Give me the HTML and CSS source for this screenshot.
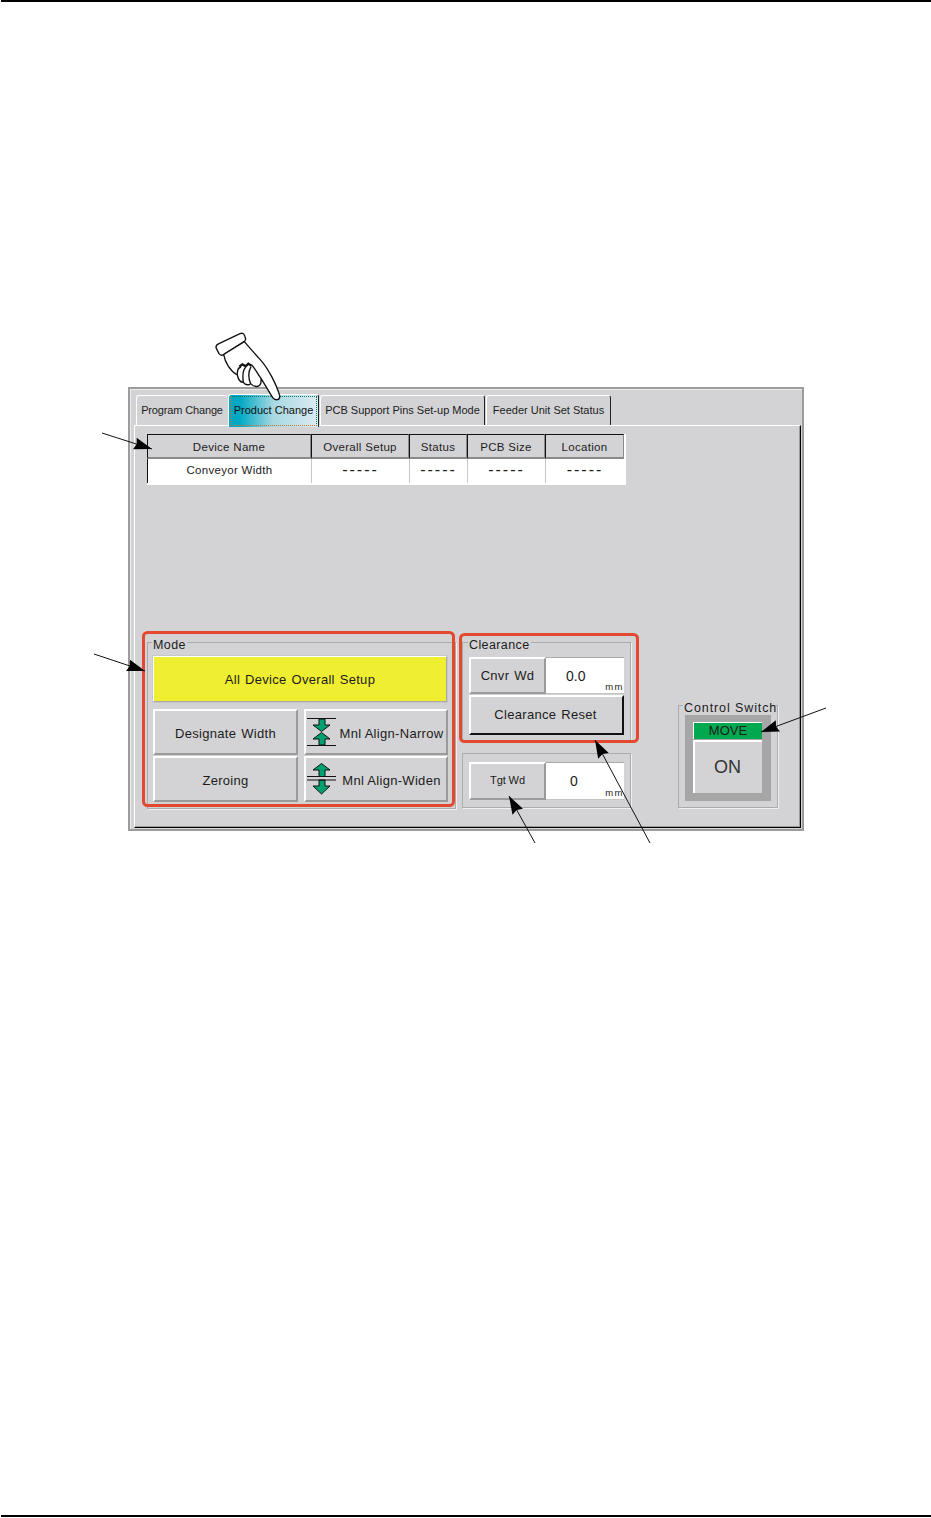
FILE: index.html
```html
<!DOCTYPE html>
<html lang="en">
<head>
    <meta charset="UTF-8">
    <meta name="viewport" content="width=device-width, initial-scale=1.0">
    <title>Product Change</title>
    <link rel="stylesheet" href="styles.css">
</head>
<body>
    <div class="page">
        <div class="rule rule-top"></div>

        <div class="window">
            <div class="tabs">
                <div class="tab">Program Change</div>
                <div class="tab tab-active"><span>Product Change</span></div>
                <div class="tab">PCB Support Pins Set-up Mode</div>
                <div class="tab">Feeder Unit Set Status</div>
            </div>

            <div class="panel">
                <table class="status">
                    <tr>
                        <th class="col-name">Device Name</th>
                        <th class="col-setup">Overall Setup</th>
                        <th class="col-status">Status</th>
                        <th class="col-size">PCB Size</th>
                        <th class="col-location">Location</th>
                    </tr>
                    <tr>
                        <td>Conveyor Width</td>
                        <td class="dash">-----</td>
                        <td class="dash">-----</td>
                        <td class="dash">-----</td>
                        <td class="dash">-----</td>
                    </tr>
                </table>

                <div class="lower">
                    <fieldset class="group group-mode">
                        <legend>Mode</legend>
                        <button class="btn btn-yellow">All Device Overall Setup</button>
                        <div class="mode-grid">
                            <button class="btn">Designate Width</button>
                            <button class="btn btn-icon">
                                <svg class="icon" viewBox="0 0 30 32">
                                    <path class="bar" d="M0 2.5H29M0 29.5H29"/>
                                    <path class="arrow-fill" d="M12 3V9H6L14.5 15.5L23 9H18V3Z"/>
                                    <path class="arrow-fill" d="M12 29V23H6L14.5 16.5L23 23H18V29Z"/>
                                </svg>
                                <span>Mnl Align-Narrow</span>
                            </button>
                            <button class="btn">Zeroing</button>
                            <button class="btn btn-icon">
                                <svg class="icon" viewBox="0 0 30 32">
                                    <path class="arrow-fill" d="M12 13.5V7H6L14.5 .5L23 7H18V13.5Z"/>
                                    <path class="arrow-fill" d="M12 17V23H6L14.5 31L23 23H18V17Z"/>
                                    <path class="bar" d="M0 13.5H29M0 17H29"/>
                                </svg>
                                <span>Mnl Align-Widen</span>
                            </button>
                        </div>
                    </fieldset>

                    <div class="middle">
                        <fieldset class="group group-clearance">
                            <legend>Clearance</legend>
                            <div class="readout readout-cnvr">
                                <button class="btn">Cnvr Wd</button>
                                <div class="field"><span class="value">0.0</span><span class="unit">mm</span></div>
                            </div>
                            <button class="btn btn-reset">Clearance Reset</button>
                        </fieldset>
                        <div class="group group-target">
                            <div class="readout readout-tgt">
                                <button class="btn btn-small">Tgt Wd</button>
                                <div class="field"><span class="value">0</span><span class="unit">mm</span></div>
                            </div>
                        </div>
                    </div>

                    <fieldset class="group group-control">
                        <legend>Control Switch</legend>
                        <div class="switch">
                            <div class="switch-state">MOVE</div>
                            <div class="switch-button">ON</div>
                        </div>
                    </fieldset>
                </div>
            </div>
        </div>

        <div class="rule rule-bottom"></div>
    </div>

    <!-- callouts drawn over the screen -->
    <svg class="hand" viewBox="0 0 270 300">
        <path class="hand-line" d="M33 68Q32 60 42 56L105 26Q115 22 119 32L122 42Q122 48 114 52L58 88Q48 94 42 86Z"/>
        <path class="hand-line" d="M56 88C60 112 75 138 97 150C100 165 108 172 115 172C122 182 132 180 137 176C148 188 165 188 168 172L168 160L203 218C210 228 226 226 224 212C215 180 190 130 165 103C155 92 135 70 118 50Z"/>
        <path class="hand-line" d="M97 150C96 135 100 128 108 126M115 172C112 150 114 135 122 127M137 176C130 160 130 140 138 125M168 160C160 150 150 130 140 120"/>
        <path class="hand-knuckle" d="M103 125L112 118L122 124L130 116L140 122"/>
    </svg>

    <svg class="callouts" viewBox="0 0 931 1518">
        <defs>
            <marker id="head" markerUnits="userSpaceOnUse" markerWidth="20" markerHeight="13" refX="18" refY="6" orient="auto">
                <path d="M0 0L18 6L0 12L2 6Z"/>
            </marker>
        </defs>
        <rect class="red-box" x="143.5" y="632.5" width="310" height="173" rx="4"/>
        <rect class="red-box" x="460.5" y="634.5" width="177" height="107" rx="4"/>
        <line class="pointer" x1="102" y1="433" x2="152" y2="449"/>
        <line class="pointer" x1="94" y1="654" x2="145" y2="671"/>
        <line class="pointer" x1="535" y1="843" x2="509" y2="796"/>
        <line class="pointer" x1="650" y1="843" x2="595" y2="740"/>
        <line class="pointer" x1="826" y1="708" x2="761" y2="732"/>
    </svg>
</body>
</html>
```

FILE: styles.css
```css
* {
    box-sizing: border-box;
}
body {
    margin: 0;
    background: white;
    font-family: "Liberation Sans", Arial, sans-serif;
    color: #1c1c1c;
}
.page {
    display: flex;
    flex-direction: column;
    height: 1518px;
    overflow: hidden;
}
.rule {
    height: 2px;
    margin-left: 1px;
    background: black;
}
.rule-bottom {
    margin-top: auto;
    margin-bottom: 1px;
}

/* machine screen */
.window {
    display: flex;
    flex-direction: column;
    width: 676px;
    height: 444px;
    margin: 385px 0 0 128px;
    padding: 6px 1px 1px 4px;
    background: #d3d3d5;
    border: 2px solid #9c9c9c;
    box-shadow: inset 1px 1px 0 #ececec;
}
.tabs {
    display: flex;
    height: 30px;
    margin-left: 2px;
    font-size: 11px;
}
.tab {
    display: flex;
    align-items: center;
    justify-content: center;
    height: 30px;
    padding: 0 0 2px;
    margin-right: 1px;
    border: 1px solid white;
    border-bottom: none;
    border-right: 1px solid #222;
    border-radius: 3px 3px 0 0;
    white-space: nowrap;
}
.tab:nth-child(1) {
    width: 91px;
    border-right: none;
    letter-spacing: -0.15px;
}
.tab:nth-child(3) { width: 165px; }
.tab:nth-child(4) { width: 125px; }
.tab-active {
    position: relative;
    width: 91px;
    height: 33px;
    margin-top: -1px;
    padding: 1px;
    background: linear-gradient(to right, #00a8c4 0%, #00a8c4 12%, #a8d8e2 50%, #dcecf1 100%);
}
.tab-active span {
    display: flex;
    align-items: center;
    justify-content: center;
    width: 100%;
    height: 100%;
    padding-bottom: 2px;
    color: #111;
    border-top: 1px dotted #0a7a6a;
    border-right: 1px dotted #0a7a6a;
    border-bottom: 1px dotted #d5702a;
    border-left: 1px dotted #d5702a;
}
.panel {
    display: flex;
    flex-direction: column;
    flex: 1;
    padding: 8px 0 18px 12px;
    border-top: 1px solid white;
    border-left: 1px solid white;
    border-right: 1px solid black;
    border-bottom: 1px solid black;
    box-shadow: inset -1px -1px 0 #999;
}

/* status table */
.status {
    width: 479px;
    table-layout: fixed;
    border-collapse: separate;
    border-spacing: 0;
    border-right: 2px solid white;
    border-bottom: 2px solid white;
    font-size: 11.5px;
    letter-spacing: 0.3px;
}
.status th,
.status td {
    padding: 0;
    text-align: center;
    font-weight: normal;
}
.status th {
    height: 25px;
    padding-top: 1px;
    border-top: 1px solid #111;
    border-left: 1px solid #111;
    border-right: 1px solid #8a8a8a;
    border-bottom: 2px solid #8a8a8a;
}
.status td {
    height: 24px;
    padding-bottom: 2px;
    background: white;
}
.status td:first-child {
    border-left: 1px solid #111;
}
.status td + td {
    border-left: 1px solid #c8c8c8;
}
.status .dash {
    font-size: 16px;
    letter-spacing: 2px;
}
.col-name { width: 164px; }
.col-setup { width: 98px; }
.col-status { width: 58px; }
.col-size { width: 78px; }
.col-location { width: 79px; }

/* lower groups */
.lower {
    display: flex;
    align-items: flex-end;
    margin-top: auto;
}
.group {
    margin: 0;
    min-width: 0;
    padding: 7px 5px 6px;
    border: 1px solid #ababab;
    box-shadow: 1px 1px 0 #efefef;
}
.group legend {
    padding: 6px 1px 0;
    margin-left: -1px;
    font-size: 12.5px;
    line-height: 8px;
    letter-spacing: 0.4px;
    white-space: nowrap;
}
.group-mode {
    width: 309px;
    margin-right: 6px;
}
.middle {
    display: flex;
    flex-direction: column;
    gap: 12px;
    width: 169px;
    margin-bottom: 1px;
}
.group-clearance {
    width: 169px;
    padding: 8px 6px 5px;
}
.group-target {
    padding: 8px 6px 7px;
}
.group-control {
    flex: none;
    width: 100px;
    margin-left: 47px;
    margin-bottom: 1px;
    padding: 3px 6px 6px;
}
.group-control legend {
    width: 88px;
    margin-left: -2px;
    letter-spacing: 0.9px;
}

/* buttons */
.btn {
    display: flex;
    align-items: center;
    justify-content: center;
    width: 100%;
    padding: 0;
    font-family: inherit;
    font-size: 13px;
    letter-spacing: 0.3px;
    word-spacing: 1px;
    color: #1c1c1c;
    background: #d3d3d5;
    border: 2px solid;
    border-color: white #9a9a9a #9a9a9a white;
}
.btn-yellow {
    height: 46px;
    width: 294px;
    background: #f0ee30;
    border-width: 1px;
    border-color: white #a8a8a8 #a8a8a8 white;
    box-shadow: 0 0 0 1px #c8c8c8;
}
.mode-grid {
    display: grid;
    grid-template-columns: 145px 144px;
    grid-auto-rows: 46px;
    gap: 1px 6px;
    margin-top: 7px;
}
.mode-grid .btn {
    padding-top: 2px;
}
.btn-icon {
    justify-content: flex-start;
    padding-left: 1px;
    word-spacing: 0;
}
.btn-icon span {
    flex: 1;
    text-align: center;
    white-space: nowrap;
}
.icon {
    flex: none;
    width: 30px;
    height: 32px;
    margin-top: -2px;
}
.bar {
    fill: none;
    stroke: #111;
    stroke-width: 1.2;
}
.arrow-fill {
    fill: #00a070;
    stroke: #111;
    stroke-width: 1;
}
.readout {
    display: flex;
    width: 155px;
}
.readout-cnvr { height: 37px; }
.readout-tgt { height: 38px; }
.readout .btn {
    width: 77px;
    flex: none;
}
.btn.btn-small {
    padding-bottom: 2px;
    font-size: 11px;
    letter-spacing: -0.1px;
    word-spacing: 0;
}
.field {
    display: flex;
    flex: 1;
    align-items: center;
    padding-left: 20px;
    background: white;
    font-size: 14px;
    border-top: 1px solid #aaa;
    border-bottom: 1px solid #c4c4c4;
}
.readout-tgt .field {
    padding-left: 24px;
}
.value {
    flex: 1;
}
.unit {
    align-self: flex-end;
    font-size: 9.5px;
    line-height: 12px;
    letter-spacing: 1.5px;
}
.btn-reset {
    width: 155px;
    height: 40px;
    margin-top: 1px;
    padding: 0 2px 2px 0;
    border-color: white #111 #111 white;
}

/* control switch */
.switch {
    display: flex;
    flex-direction: column;
    gap: 1px;
    width: 86px;
    height: 86px;
    padding: 7px 9px 8px 8px;
    background: #a6a6a6;
}
.switch-state {
    height: 17px;
    line-height: 16px;
    text-align: center;
    font-size: 13px;
    background: #00a850;
    border-top: 1px solid white;
    border-left: 1px solid white;
}
.switch-button {
    display: flex;
    flex: 1;
    align-items: center;
    justify-content: center;
    padding-right: 2px;
    font-size: 18px;
    color: #333;
    background: #d3d3d5;
    border-top: 2px solid white;
    border-left: 2px solid white;
}

/* callouts */
.hand {
    position: absolute;
    left: 205px;
    top: 325px;
    width: 90px;
    height: 100px;
}
.hand-line {
    fill: white;
    stroke: #111;
    stroke-width: 4;
    stroke-linejoin: round;
}
.hand-line:nth-child(3) {
    fill: none;
}
.hand-knuckle {
    fill: none;
    stroke: #111;
    stroke-width: 7;
}
.callouts {
    position: absolute;
    left: 0;
    top: 0;
    width: 931px;
    height: 1518px;
    pointer-events: none;
}
.red-box {
    fill: none;
    stroke: #e2492f;
    stroke-width: 3;
}
.pointer {
    stroke: #111;
    stroke-width: 1;
    marker-end: url(#head);
}
```
